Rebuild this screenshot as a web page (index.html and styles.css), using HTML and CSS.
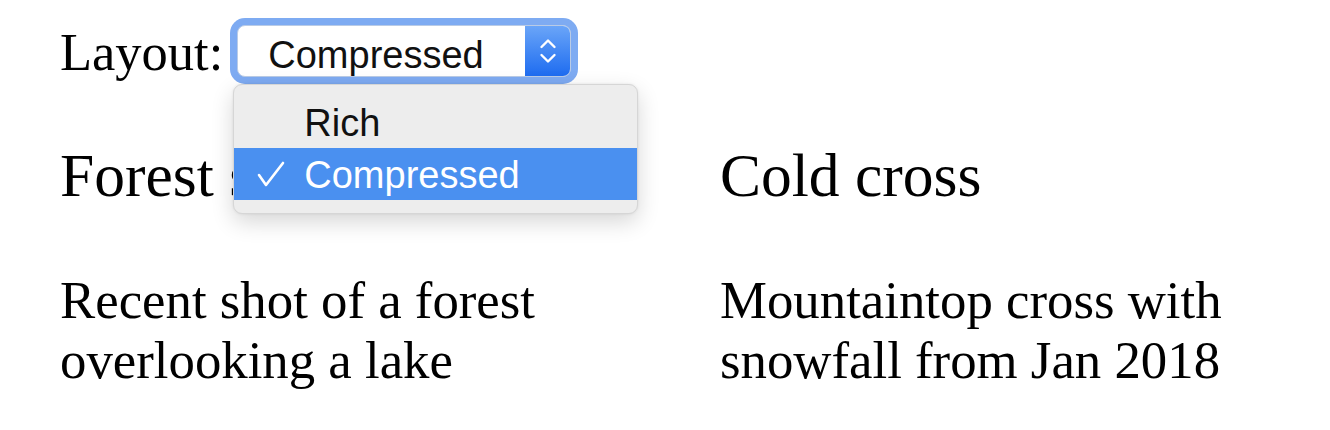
FILE: index.html
```html
<!DOCTYPE html>
<html>
<head>
<meta charset="utf-8">
<link rel="stylesheet" href="styles.css">
</head>
<body>
<div class="page">
  <div class="topbar">
    <span class="label">Layout:</span>
    <div class="select-wrap">
      <div class="select">
        <div class="select-inner">
          <span class="select-value">Compressed</span>
          <span class="stepper">
            <svg width="20" height="30" viewBox="0 0 20 30">
              <path d="M3.5 11 L10 4.5 L16.5 11" fill="none" stroke="#fff" stroke-width="2.4" stroke-linecap="round" stroke-linejoin="round"/>
              <path d="M3.5 19 L10 25.5 L16.5 19" fill="none" stroke="#fff" stroke-width="2.4" stroke-linecap="round" stroke-linejoin="round"/>
            </svg>
          </span>
        </div>
      </div>
      <div class="menu">
        <div class="menu-item"><span class="check"></span><span class="item-text">Rich</span></div>
        <div class="menu-item selected">
          <span class="check">
            <svg width="30" height="28" viewBox="0 0 30 28">
              <path d="M3 15 L10 25 L27 3" fill="none" stroke="#fff" stroke-width="2.6" stroke-linecap="round" stroke-linejoin="round"/>
            </svg>
          </span>
          <span class="item-text">Compressed</span>
        </div>
      </div>
    </div>
  </div>
  <div class="grid">
    <div class="card">
      <h3 class="title">Forest scene</h3>
      <p class="desc">Recent shot of a forest overlooking a lake</p>
    </div>
    <div class="card">
      <h3 class="title">Cold cross</h3>
      <p class="desc">Mountaintop cross with snowfall from Jan 2018</p>
    </div>
  </div>
</div>
</body>
</html>
```

FILE: styles.css
```css
html, body {
  margin: 0;
  padding: 0;
  background: #ffffff;
}

.page {
  padding: 18px 0 0 60px;
  font-family: "Liberation Serif", "Times New Roman", serif;
  color: #000000;
}

.topbar {
  display: flex;
  align-items: center;
  gap: 7px;
  height: 66px;
}

.label {
  font-size: 52.5px;
  line-height: 52px;
  padding-top: 2px;
}

.select-wrap {
  position: relative;
}

.select {
  width: 348px;
  height: 66px;
  box-sizing: border-box;
  padding: 7px;
  border-radius: 15px;
  background: #7eabf2;
}

.select-inner {
  display: flex;
  height: 100%;
  box-sizing: border-box;
  border: 1px solid #b9cbe6;
  border-radius: 8px;
  background: #ffffff;
  overflow: hidden;
}

.select-value {
  flex: 1;
  padding: 7px 0 0 30px;
  font-family: "Liberation Sans", Arial, sans-serif;
  font-size: 38px;
  line-height: 45px;
  color: #111111;
}

.stepper {
  width: 45px;
  display: flex;
  align-items: center;
  justify-content: center;
  background: linear-gradient(#6aa5f8, #1e6cf0);
}

.menu {
  position: absolute;
  left: 3px;
  top: 66px;
  width: 405px;
  box-sizing: border-box;
  padding: 11px 0 13px;
  background: #ededed;
  border: 1px solid #d6d6d6;
  border-radius: 9px;
  box-shadow: 0 8px 22px rgba(0, 0, 0, 0.16), 0 0 3px rgba(0, 0, 0, 0.08);
  font-family: "Liberation Sans", Arial, sans-serif;
  font-size: 38px;
  color: #111111;
}

.menu-item {
  display: flex;
  align-items: center;
  height: 52px;
  line-height: 52px;
}

.item-text {
  padding-top: 1px;
}

.menu-item.selected {
  background: #4a90f0;
  color: #ffffff;
}

.check {
  width: 70px;
  box-sizing: border-box;
  padding-left: 22px;
  display: flex;
  align-items: center;
}

.grid {
  display: grid;
  grid-template-columns: 600px 600px;
  column-gap: 60px;
  margin-top: 56px;
}

.title {
  margin: 0;
  font-size: 61.5px;
  line-height: 70px;
  font-weight: normal;
}

.desc {
  margin: 60px 0 0;
  font-size: 52.8px;
  line-height: 60px;
}
```
